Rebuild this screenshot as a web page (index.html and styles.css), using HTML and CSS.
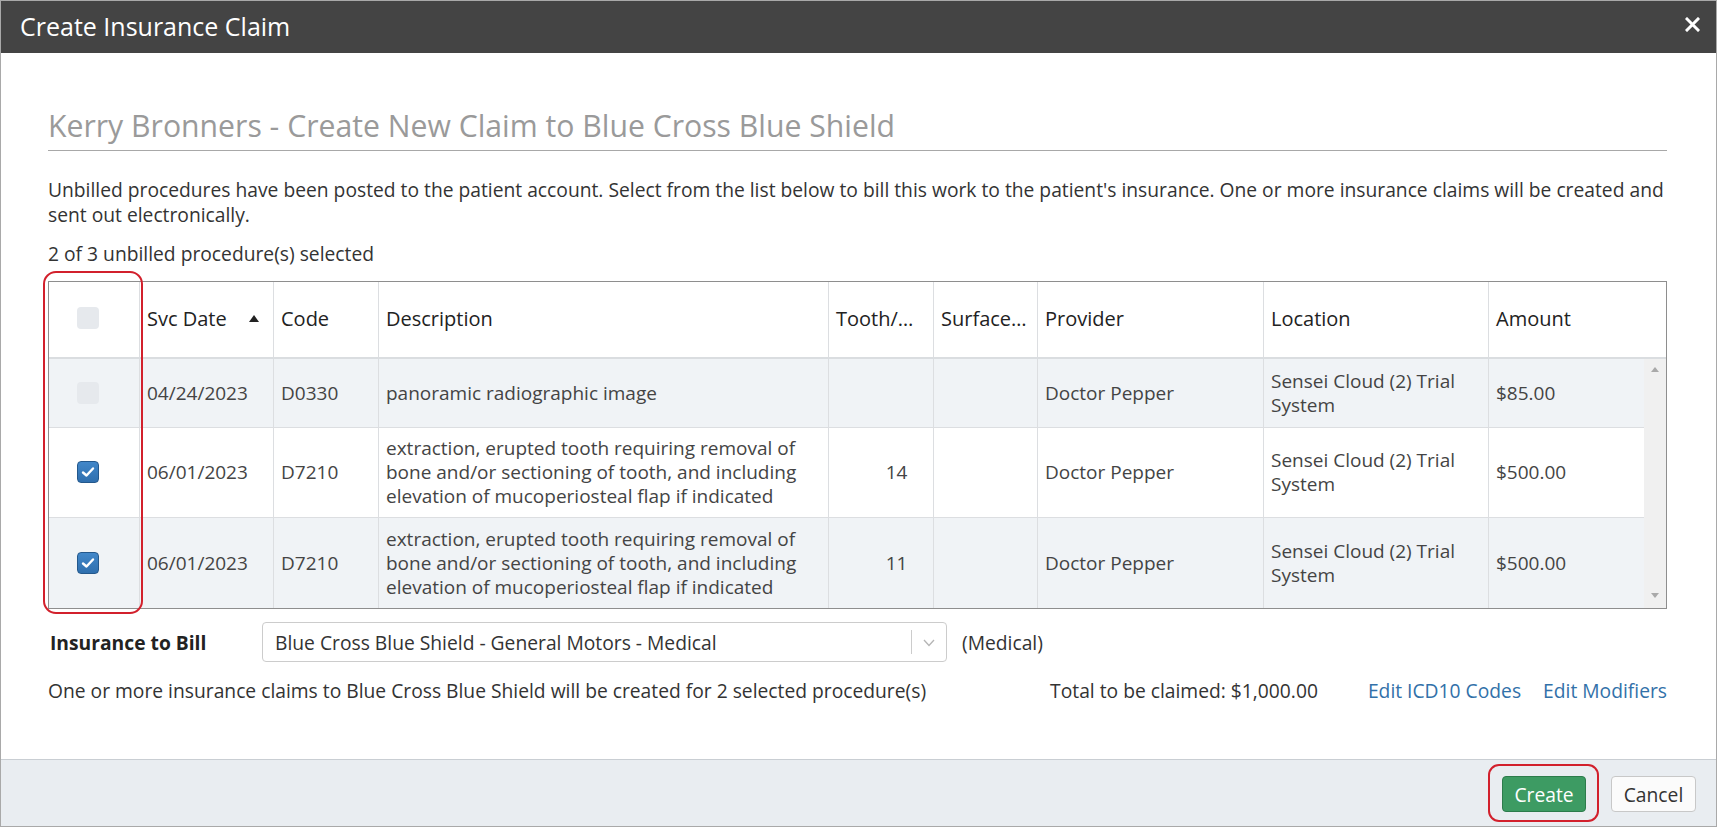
FILE: index.html
```html
<!DOCTYPE html>
<html lang="en">
<head>
<meta charset="utf-8">
<title>Create Insurance Claim</title>
<link rel="stylesheet" href="styles.css">
</head>
<body>
<div class="modal">
  <div class="titlebar">
    <span class="title">Create Insurance Claim</span>
    <span class="close" aria-label="Close">
      <svg width="15" height="15" viewBox="0 0 15 15"><path d="M2 2 L13 13 M13 2 L2 13" stroke="#fff" stroke-width="3" stroke-linecap="square"/></svg>
    </span>
  </div>

  <div class="content">
    <h2 class="heading">Kerry Bronners - Create New Claim to Blue Cross Blue Shield</h2>
    <p class="intro">Unbilled procedures have been posted to the patient account. Select from the list below to bill this work to the patient's insurance. One or more insurance claims will be created and sent out electronically.</p>
    <p class="count">2 of 3 unbilled procedure(s) selected</p>

    <div class="grid">
      <div class="grid-head">
        <div class="hcell cb"><span class="checkbox off"></span></div>
        <div class="hcell">Svc Date <span class="sort"></span></div>
        <div class="hcell">Code</div>
        <div class="hcell">Description</div>
        <div class="hcell">Tooth/…</div>
        <div class="hcell">Surface…</div>
        <div class="hcell">Provider</div>
        <div class="hcell">Location</div>
        <div class="hcell last">Amount</div>
      </div>
      <div class="grid-body">
        <div class="rows">
          <div class="row alt">
            <div class="cell cb"><span class="checkbox off"></span></div>
            <div class="cell">04/24/2023</div>
            <div class="cell">D0330</div>
            <div class="cell">panoramic radiographic image</div>
            <div class="cell tooth"></div>
            <div class="cell"></div>
            <div class="cell">Doctor Pepper</div>
            <div class="cell">Sensei Cloud (2) Trial System</div>
            <div class="cell last">$85.00</div>
          </div>
          <div class="row">
            <div class="cell cb"><span class="checkbox on"><svg width="14" height="12" viewBox="0 0 14 12"><path d="M2 6.5 L5.5 9.5 L12 2.5" fill="none" stroke="#fff" stroke-width="2.4" stroke-linecap="round" stroke-linejoin="round"/></svg></span></div>
            <div class="cell">06/01/2023</div>
            <div class="cell">D7210</div>
            <div class="cell">extraction, erupted tooth requiring removal of bone and/or sectioning of tooth, and including elevation of mucoperiosteal flap if indicated</div>
            <div class="cell tooth">14</div>
            <div class="cell"></div>
            <div class="cell">Doctor Pepper</div>
            <div class="cell">Sensei Cloud (2) Trial System</div>
            <div class="cell last">$500.00</div>
          </div>
          <div class="row alt lastrow">
            <div class="cell cb"><span class="checkbox on"><svg width="14" height="12" viewBox="0 0 14 12"><path d="M2 6.5 L5.5 9.5 L12 2.5" fill="none" stroke="#fff" stroke-width="2.4" stroke-linecap="round" stroke-linejoin="round"/></svg></span></div>
            <div class="cell">06/01/2023</div>
            <div class="cell">D7210</div>
            <div class="cell">extraction, erupted tooth requiring removal of bone and/or sectioning of tooth, and including elevation of mucoperiosteal flap if indicated</div>
            <div class="cell tooth">11</div>
            <div class="cell"></div>
            <div class="cell">Doctor Pepper</div>
            <div class="cell">Sensei Cloud (2) Trial System</div>
            <div class="cell last">$500.00</div>
          </div>
        </div>
        <div class="scrollbar">
          <span class="arrow up"></span>
          <span class="arrow down"></span>
        </div>
      </div>
    </div>

    <div class="ins-row">
      <span class="ins-label">Insurance to Bill</span>
      <div class="select">
        <span class="select-text">Blue Cross Blue Shield - General Motors - Medical</span>
        <span class="select-divider"></span>
        <svg class="chevron" width="12" height="8" viewBox="0 0 12 8"><path d="M1 1 L6 6.5 L11 1" fill="none" stroke="#b5b5b5" stroke-width="1.3"/></svg>
      </div>
      <span class="ins-type">(Medical)</span>
    </div>

    <div class="summary">
      <span class="summary-text">One or more insurance claims to Blue Cross Blue Shield will be created for 2 selected procedure(s)</span>
      <span class="total">Total to be claimed: $1,000.00</span>
      <a class="link" href="#">Edit ICD10 Codes</a>
      <a class="link" href="#">Edit Modifiers</a>
    </div>
  </div>

  <div class="footer">
    <button class="btn btn-create">Create</button>
    <button class="btn btn-cancel">Cancel</button>
  </div>

  <div class="annot annot-cb"></div>
  <div class="annot annot-create"></div>
</div>
</body>
</html>
```

FILE: styles.css
```css
* { box-sizing: border-box; }

html, body {
  margin: 0;
  padding: 0;
  background: #fff;
}

body {
  font-family: "Open Sans", "Noto Sans", sans-serif;
  color: #333;
}

.modal {
  position: relative;
  height: 827px;
  border: 1px solid #a9a9a9;
  display: flex;
  flex-direction: column;
  overflow: hidden;
}

.titlebar {
  height: 52px;
  flex: none;
  background: #444444;
  display: flex;
  align-items: center;
  justify-content: space-between;
  padding: 0 16px 0 19px;
}

.title {
  color: #fff;
  font-size: 25px;
  line-height: 30px;
  margin-top: -3px;
}

.close {
  display: flex;
  margin-top: -6px;
}

.content {
  flex: 1;
  padding: 56px 49px 0 47px;
}

.heading {
  margin: 0;
  font-size: 30.2px;
  font-weight: 400;
  line-height: 33px;
  color: #9a9a9a;
  padding-bottom: 8px;
  border-bottom: 1px solid #a8a8a8;
}

.intro, .count {
  font-size: 19.25px;
  line-height: 25px;
  color: #333;
  margin: 0;
}

.intro { margin-top: 26px; }
.count { margin-top: 14px; }

.grid {
  margin-top: 15px;
  border: 1px solid #8e8e8e;
  background: #fff;
}

.grid-head,
.row {
  display: grid;
  grid-template-columns: 91px 134px 105px 450px 105px 104px 226px 225px 1fr;
}

.grid-head {
  border-bottom: 2px solid #dadde0;
}

.hcell {
  height: 75px;
  display: flex;
  align-items: center;
  padding: 0 7px 3px;
  font-size: 20px;
  color: #222;
  border-right: 1px solid #dcdee1;
  white-space: nowrap;
  overflow: hidden;
}

.hcell.last { border-right: none; }

.cb { padding-left: 28px; }

.sort {
  margin-left: auto;
  margin-right: 7px;
  flex: none;
  width: 0;
  height: 0;
  border-left: 5.5px solid transparent;
  border-right: 5.5px solid transparent;
  border-bottom: 7px solid #222;
}

.grid-body {
  display: flex;
}

.rows {
  flex: 1;
}

.row {
  min-height: 69px;
  border-bottom: 1px solid #dcdee1;
  background: #fff;
}

.row.alt { background: #f0f3f6; }
.row.lastrow { border-bottom: none; min-height: 90px; }

.cell {
  display: flex;
  align-items: center;
  padding: 8px 7px 9px;
  font-size: 19px;
  line-height: 24px;
  color: #444;
  border-right: 1px solid #dcdee1;
}

.cell.cb { padding-left: 28px; }
.cell.last { border-right: none; }
.cell.tooth { justify-content: center; padding-left: 38px; }

.checkbox {
  width: 22px;
  height: 22px;
  border-radius: 4px;
  display: flex;
  align-items: center;
  justify-content: center;
}

.checkbox.off {
  background: #e6e9ed;
}

.checkbox.on {
  background: linear-gradient(#4287c9, #2f6fae);
  border: 1px solid #24588c;
}

.scrollbar {
  width: 22px;
  flex: none;
  background: #f0f0f0;
  display: flex;
  flex-direction: column;
  justify-content: space-between;
  align-items: center;
  padding: 8px 0 10px;
}

.arrow {
  width: 0;
  height: 0;
  border-left: 4px solid transparent;
  border-right: 4px solid transparent;
}

.arrow.up { border-bottom: 5px solid #a9a9a9; }
.arrow.down { border-top: 5px solid #a9a9a9; }

.ins-row {
  margin-top: 13px;
  height: 40px;
  display: flex;
  align-items: center;
}

.ins-label {
  width: 214px;
  padding-left: 2px;
  font-size: 19.25px;
  font-weight: 700;
  color: #222;
}

.select {
  width: 685px;
  height: 40px;
  border: 1px solid #cccccc;
  border-radius: 4px;
  display: flex;
  align-items: center;
  padding-left: 12px;
  background: #fff;
}

.select-text {
  flex: 1;
  font-size: 19.25px;
  color: #333;
  white-space: nowrap;
}

.select-divider {
  width: 1px;
  height: 24px;
  background: #cccccc;
}

.chevron {
  margin: 2px 11px 0 11px;
}

.ins-type {
  margin-left: 15px;
  font-size: 19.25px;
  color: #333;
}

.summary {
  margin-top: 16px;
  display: flex;
  align-items: center;
  font-size: 19.25px;
  line-height: 25px;
  color: #333;
  white-space: nowrap;
}

.total {
  margin-left: auto;
  margin-right: 50px;
}

.link {
  color: #3271a9;
  text-decoration: none;
}

.link + .link { margin-left: 22px; }

.footer {
  flex: none;
  height: 67px;
  background: #e9edf1;
  border-top: 1px solid #c9ced3;
  display: flex;
  justify-content: flex-end;
  align-items: flex-start;
  padding: 16px 20px 0 0;
  gap: 25px;
}

.btn {
  height: 36px;
  font-family: "Open Sans", "Noto Sans", sans-serif;
  font-size: 19.25px;
  border-radius: 4px;
  padding: 0 8px;
  cursor: pointer;
}

.btn-create {
  width: 84px;
  background: #3d9b63;
  border: 1px solid #2d7c4c;
  color: #fff;
}

.btn-cancel {
  width: 85px;
  background: #fbfbfb;
  border: 1px solid #c8c8c8;
  color: #333;
}

.annot {
  position: absolute;
  border: 2px solid #d2202c;
  pointer-events: none;
}

.annot-cb {
  left: 42px;
  top: 270px;
  width: 100px;
  height: 343px;
  border-radius: 13px;
}

.annot-create {
  left: 1487px;
  top: 763px;
  width: 111px;
  height: 58px;
  border-radius: 11px;
}
```
